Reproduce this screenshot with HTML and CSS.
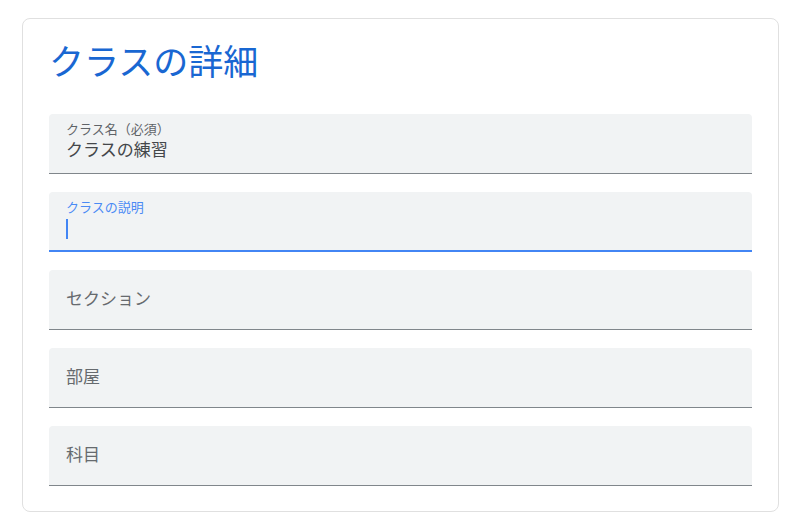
FILE: index.html
```html
<!DOCTYPE html>
<html lang="ja">
<head>
<meta charset="utf-8">
<link rel="stylesheet" href="styles.css">
</head>
<body>
<div class="page">
  <section class="card">
    <h1 class="title">クラスの詳細</h1>
    <div class="fields">
      <div class="field">
        <div class="label">クラス名（必須）</div>
        <div class="value">クラスの練習</div>
      </div>
      <div class="field focused">
        <div class="label">クラスの説明</div>
        <div class="value"><span class="caret"></span></div>
      </div>
      <div class="field empty">
        <div class="placeholder">セクション</div>
      </div>
      <div class="field empty">
        <div class="placeholder">部屋</div>
      </div>
      <div class="field empty">
        <div class="placeholder">科目</div>
      </div>
    </div>
  </section>
</div>
</body>
</html>
```

FILE: styles.css
```css
html, body {
  margin: 0;
  padding: 0;
  background: #ffffff;
}
body {
  font-family: Roboto, "Noto Sans CJK JP", "Noto Sans", sans-serif;
  color: #3c4043;
}
.page {
  padding: 18px 21px 20px 22px;
}
.card {
  border: 1px solid #e0e0e0;
  border-radius: 8px;
  padding: 25px 26px 25px 26px;
  box-sizing: border-box;
  height: 494px;
}
.title {
  margin: 0;
  font-size: 35px;
  font-weight: 400;
  line-height: 40px;
  color: #1967d2;
  letter-spacing: 0;
}
.fields {
  margin-top: 30px;
  display: flex;
  flex-direction: column;
  gap: 18px;
}
.field {
  height: 59px;
  background: #f1f3f4;
  border-radius: 4px 4px 0 0;
  border-bottom: 1px solid #80868b;
  padding: 0 17px;
  display: flex;
  flex-direction: column;
  justify-content: flex-start;
}
.field .label {
  margin-top: 7px;
  font-size: 13px;
  line-height: 17px;
  color: #5f6368;
}
.field .value {
  font-size: 17px;
  line-height: 24px;
  color: #44474a;
  height: 24px;
  display: flex;
  align-items: center;
}
.field.focused {
  border-bottom: 2px solid #4285f4;
  height: 58px;
}
.field.focused .label {
  color: #4a8af4;
}
.caret {
  display: block;
  width: 2px;
  height: 20px;
  background: #4285f4;
  margin-top: 1px;
}
.field.empty {
  justify-content: center;
}
.placeholder {
  font-size: 17px;
  line-height: 24px;
  color: #666a6e;
  margin-bottom: 2px;
}
```
